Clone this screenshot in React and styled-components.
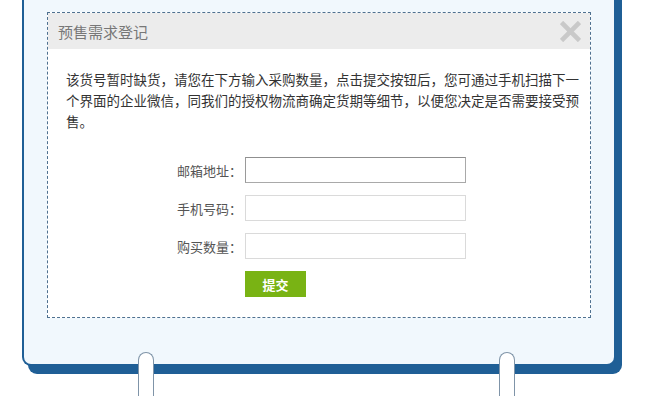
import styled, { createGlobalStyle } from "styled-components"

const GlobalStyle = createGlobalStyle`
    html, body {
        margin: 0;
        padding: 0;
        background: #ffffff;
        font-family: "Noto Sans CJK SC", "Noto Sans", sans-serif;
    }
`

const Page = styled.div`
    position: relative;
    width: 650px;
    height: 396px;
    overflow: hidden;
    background: #ffffff;
`

const Frame = styled.div`
    margin-top: -30px;
    margin-left: 22px;
    width: 594px;
    height: 396px;
    padding: 42px 0 0 23px;
    box-sizing: border-box;
    background: #f1f8fd;
    border: 2px solid #1f5f96;
    border-top: none;
    border-radius: 0 0 9px 9px;
    box-shadow: 6px 8px 0 #1f5f96;
`

const Dialog = styled.div`
    width: 544px;
    background: #ffffff;
    border: 1px dashed #4f7190;
    box-sizing: border-box;
`

const Header = styled.div`
    display: flex;
    align-items: center;
    justify-content: space-between;
    height: 36px;
    padding: 0 9px 0 10px;
    background: #ececec;
`

const Title = styled.h3`
    margin: 0;
    font-size: 15px;
    font-weight: 400;
    color: #777777;
`

const Close = styled.svg`
    width: 21px;
    height: 21px;
`

const Body = styled.div`
    padding: 20px 6px 20px 18px;
`

const Notice = styled.p`
    margin: 0;
    font-size: 13.5px;
    line-height: 21px;
    color: #333333;
    line-break: anywhere;
`

const Form = styled.form`
    display: flex;
    flex-direction: column;
    gap: 12px;
    margin-top: 25px;
`

const Row = styled.div`
    display: flex;
    align-items: center;
    height: 26px;
`

const Label = styled.label`
    width: 176px;
    padding-right: 4px;
    text-align: right;
    font-size: 13px;
    color: #555555;
`

const Input = styled.input`
    width: 221px;
    height: 26px;
    box-sizing: border-box;
    margin: 0 0 0 -1px;
    padding: 0 6px;
    background: #ffffff;
    border: 1px solid ${({ $active }) => ($active ? "#a9a9a9" : "#dadada")};
    ${({ $active }) => $active && `
    border-top-color: #8f8f8f;
    border-left-color: #9a9a9a;
`};
    outline: none;
`

const Submit = styled.button`
    margin-left: 179px;
    width: 61px;
    height: 26px;
    border: none;
    background: #79b314;
    color: #ffffff;
    font-family: inherit;
    font-size: 13px;
    font-weight: 700;
    cursor: pointer;
`

const Hanger = styled.div`
    position: absolute;
    top: 352px;
    left: ${({ $x }) => $x}px;
    width: 14px;
    height: 60px;
    background: #ffffff;
    border: 1.5px solid #7f94a8;
    border-bottom: none;
    border-radius: 8px 8px 0 0;
`

const fields = [
    { label: "邮箱地址：", active: true },
    { label: "手机号码：" },
    { label: "购买数量：" },
]

let App = () => {
    return (
        <Page>
            <GlobalStyle />
            <Frame>
                <Dialog>
                    <Header>
                        <Title>预售需求登记</Title>
                        <Close viewBox="0 0 20 20">
                            <path d="M3 3 L17 17 M17 3 L3 17" stroke="#c9c9c9" strokeWidth="4.5" strokeLinecap="square" />
                        </Close>
                    </Header>
                    <Body>
                        <Notice>
                            该货号暂时缺货，请您在下方输入采购数量，点击提交按钮后，您可通过手机扫描下一个界面的企业微信，同我们的授权物流商确定货期等细节，以便您决定是否需要接受预售。
                        </Notice>
                        <Form onSubmit={(e) => e.preventDefault()}>
                            {fields.map((f) => (
                                <Row key={f.label}>
                                    <Label>{f.label}</Label>
                                    <Input $active={f.active} />
                                </Row>
                            ))}
                            <Row>
                                <Submit type="submit">提交</Submit>
                            </Row>
                        </Form>
                    </Body>
                </Dialog>
            </Frame>
            <Hanger $x={138} />
            <Hanger $x={499} />
        </Page>
    )
}

export default App
